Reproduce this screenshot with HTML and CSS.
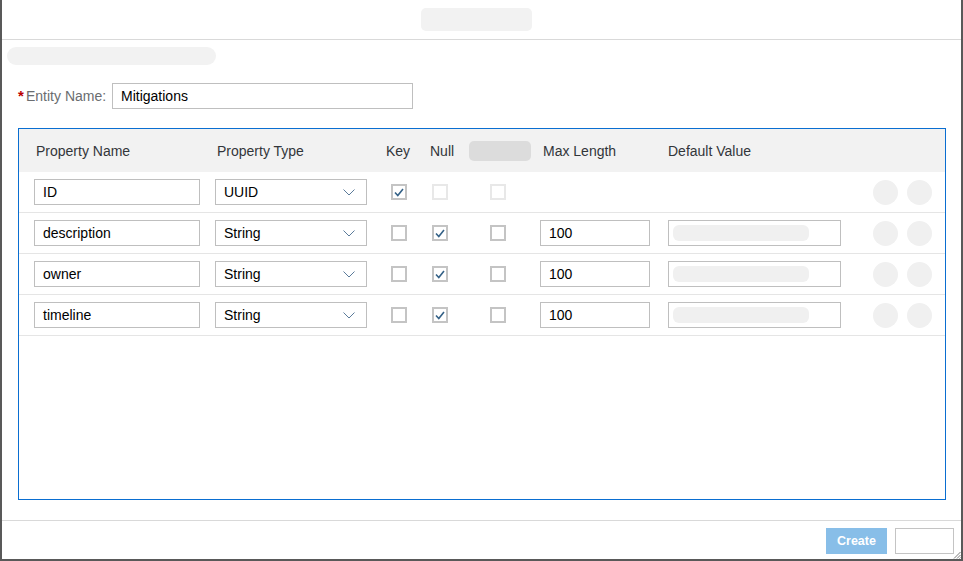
FILE: index.html
```html
<!DOCTYPE html>
<html lang="en">
<head>
<meta charset="utf-8">
<title>Create Entity</title>
<link rel="stylesheet" href="styles.css">
</head>
<body>
<div class="dialog">
  <header class="dlg-header">
    <div class="title-pill"></div>
  </header>

  <main class="dlg-content">
    <div class="sub-pill"></div>

    <div class="entity-row">
      <span class="req">*</span><label class="entity-label">Entity Name:</label>
      <div class="input entity-input">Mitigations</div>
    </div>

    <section class="table">
      <div class="thead">
        <div class="c1 h1">Property Name</div>
        <div class="c2 h2">Property Type</div>
        <div class="c3 h3">Key</div>
        <div class="c4 h4">Null</div>
        <div class="c5 h5"><span class="head-pill"></span></div>
        <div class="c6 h6">Max Length</div>
        <div class="c7 h7">Default Value</div>
      </div>

      <div class="row">
        <div class="c1"><div class="input name-input">ID</div></div>
        <div class="c2"><div class="input select">UUID<svg class="chev" width="12" height="7" viewBox="0 0 12 7"><polyline points="0.5,0.5 6,6 11.5,0.5" fill="none" stroke="#5b7b9a" stroke-width="1"/></svg></div></div>
        <div class="c3"><span class="cb checked"><svg width="10" height="9" viewBox="0 0 10 9"><polyline points="1,4.5 3.8,7.5 9,1" fill="none" stroke="#346187" stroke-width="1.6"/></svg></span></div>
        <div class="c4"><span class="cb disabled"></span></div>
        <div class="c5"><span class="cb disabled"></span></div>
        <div class="c6"></div>
        <div class="c7"></div>
        <div class="c8"><span class="dot"></span><span class="dot"></span></div>
      </div>

      <div class="row">
        <div class="c1"><div class="input name-input">description</div></div>
        <div class="c2"><div class="input select">String<svg class="chev" width="12" height="7" viewBox="0 0 12 7"><polyline points="0.5,0.5 6,6 11.5,0.5" fill="none" stroke="#5b7b9a" stroke-width="1"/></svg></div></div>
        <div class="c3"><span class="cb"></span></div>
        <div class="c4"><span class="cb checked"><svg width="10" height="9" viewBox="0 0 10 9"><polyline points="1,4.5 3.8,7.5 9,1" fill="none" stroke="#346187" stroke-width="1.6"/></svg></span></div>
        <div class="c5"><span class="cb"></span></div>
        <div class="c6"><div class="input len-input">100</div></div>
        <div class="c7"><div class="input def-input"><span class="def-pill"></span></div></div>
        <div class="c8"><span class="dot"></span><span class="dot"></span></div>
      </div>

      <div class="row">
        <div class="c1"><div class="input name-input">owner</div></div>
        <div class="c2"><div class="input select">String<svg class="chev" width="12" height="7" viewBox="0 0 12 7"><polyline points="0.5,0.5 6,6 11.5,0.5" fill="none" stroke="#5b7b9a" stroke-width="1"/></svg></div></div>
        <div class="c3"><span class="cb"></span></div>
        <div class="c4"><span class="cb checked"><svg width="10" height="9" viewBox="0 0 10 9"><polyline points="1,4.5 3.8,7.5 9,1" fill="none" stroke="#346187" stroke-width="1.6"/></svg></span></div>
        <div class="c5"><span class="cb"></span></div>
        <div class="c6"><div class="input len-input">100</div></div>
        <div class="c7"><div class="input def-input"><span class="def-pill"></span></div></div>
        <div class="c8"><span class="dot"></span><span class="dot"></span></div>
      </div>

      <div class="row">
        <div class="c1"><div class="input name-input">timeline</div></div>
        <div class="c2"><div class="input select">String<svg class="chev" width="12" height="7" viewBox="0 0 12 7"><polyline points="0.5,0.5 6,6 11.5,0.5" fill="none" stroke="#5b7b9a" stroke-width="1"/></svg></div></div>
        <div class="c3"><span class="cb"></span></div>
        <div class="c4"><span class="cb checked"><svg width="10" height="9" viewBox="0 0 10 9"><polyline points="1,4.5 3.8,7.5 9,1" fill="none" stroke="#346187" stroke-width="1.6"/></svg></span></div>
        <div class="c5"><span class="cb"></span></div>
        <div class="c6"><div class="input len-input">100</div></div>
        <div class="c7"><div class="input def-input"><span class="def-pill"></span></div></div>
        <div class="c8"><span class="dot"></span><span class="dot"></span></div>
      </div>
    </section>
  </main>

  <footer class="dlg-footer">
    <button class="btn btn-create">Create</button>
    <button class="btn btn-plain"></button>
  </footer>

  <svg class="grip" width="8" height="8" viewBox="0 0 8 8">
    <line x1="7.5" y1="1" x2="1" y2="7.5" stroke="#7a7a7a" stroke-width="1"/>
    <line x1="7.5" y1="4" x2="4" y2="7.5" stroke="#7a7a7a" stroke-width="1"/>
    <line x1="7.5" y1="6.5" x2="6.5" y2="7.5" stroke="#7a7a7a" stroke-width="1"/>
  </svg>
</div>
</body>
</html>
```

FILE: styles.css
```css
html, body {
  margin: 0;
  padding: 0;
  background: #ffffff;
}

body {
  font-family: "Liberation Sans", Arial, sans-serif;
  font-size: 14px;
  color: #32363a;
}

.dialog {
  position: relative;
  width: 963px;
  height: 561px;
  box-sizing: border-box;
  border-left: 2px solid #595959;
  border-right: 2px solid #595959;
  border-bottom: 2px solid #595959;
  display: flex;
  flex-direction: column;
  background: #fff;
}

/* Header */
.dlg-header {
  height: 39px;
  border-bottom: 1px solid #d9d9d9;
  display: flex;
  align-items: center;
  padding-left: 419px;
  flex-shrink: 0;
}

.title-pill {
  width: 111px;
  height: 23px;
  border-radius: 5px;
  background: #f2f2f2;
}

/* Content */
.dlg-content {
  flex: 1;
  display: flex;
  flex-direction: column;
}

.sub-pill {
  width: 209px;
  height: 18px;
  margin: 7px 0 0 5px;
  border-radius: 9px;
  background: #f2f2f2;
}

.entity-row {
  display: flex;
  align-items: center;
  height: 26px;
  margin-top: 18px;
  padding-left: 16px;
}

.req {
  color: #bb0000;
  font-size: 15px;
  font-weight: bold;
  width: 8px;
  line-height: 1;
  position: relative;
  top: -1px;
}

.entity-label {
  color: #6a6d70;
  width: 86px;
}

.input {
  box-sizing: border-box;
  height: 26px;
  border: 1px solid #bfbfbf;
  background: #fff;
  color: #000;
  padding: 0 8px;
  display: flex;
  align-items: center;
  font-size: 14px;
}

.entity-input {
  width: 301px;
}

/* Table */
.table {
  box-sizing: border-box;
  width: 928px;
  height: 372px;
  margin: 19px 0 0 16px;
  border: 1px solid #0a6ed1;
}

.thead {
  display: flex;
  align-items: center;
  height: 43px;
  background: #f2f2f2;
  color: #32363a;
}

.row {
  display: flex;
  align-items: center;
  height: 41px;
  box-sizing: border-box;
  border-bottom: 1px solid #e5e5e5;
}

.c1 { width: 196px; padding-left: 15px; box-sizing: border-box; }
.c2 { width: 170px; box-sizing: border-box; }
.c3 { width: 41px; padding-left: 6px; box-sizing: border-box; }
.c4 { width: 40px; padding-left: 6px; box-sizing: border-box; }
.c5 { width: 74px; padding-left: 24px; box-sizing: border-box; }
.c6 { width: 128px; box-sizing: border-box; }
.c7 { width: 205px; box-sizing: border-box; }
.c8 { display: flex; gap: 9px; }

.row > div { display: flex; align-items: center; }

.thead .h1 { padding-left: 17px; }
.thead .h2 { padding-left: 2px; }
.thead .h3 { padding-left: 1px; }
.thead .h4 { padding-left: 4px; }
.thead .h5 { padding-left: 3px; display: flex; }
.thead .h6 { padding-left: 3px; }

.head-pill {
  display: block;
  width: 62px;
  height: 20px;
  border-radius: 5px;
  background: #dcdcdc;
}

.name-input { width: 166px; }

.select {
  width: 152px;
  justify-content: space-between;
  padding-right: 11px;
}

.chev { display: block; }

.len-input { width: 110px; }

.def-input {
  width: 173px;
  padding-left: 4px;
}

.def-pill {
  display: block;
  width: 136px;
  height: 16px;
  border-radius: 6px;
  background: #f0f0f0;
}

.cb {
  box-sizing: border-box;
  width: 16px;
  height: 16px;
  border: 2px solid #c4c4c4;
  background: #fff;
  display: flex;
  align-items: center;
  justify-content: center;
}

.cb.disabled {
  border-color: #e8e8e8;
}

.cb svg { display: block; }

.dot {
  width: 25px;
  height: 25px;
  border-radius: 50%;
  background: #f0f0f0;
}

/* Footer */
.dlg-footer {
  height: 39px;
  box-sizing: border-box;
  border-top: 1px solid #d9d9d9;
  display: flex;
  justify-content: flex-end;
  align-items: flex-start;
  gap: 8px;
  padding: 7px 7px 0 0;
  flex-shrink: 0;
}

.btn {
  height: 26px;
  box-sizing: border-box;
  font-family: "Liberation Sans", Arial, sans-serif;
  font-size: 12.5px;
  font-weight: bold;
  margin: 0;
  cursor: default;
}

.btn-create {
  width: 61px;
  background: #88bee8;
  color: #ffffff;
  border: none;
}

.btn-plain {
  width: 59px;
  background: #fff;
  border: 1px solid #c4c4c4;
}

.grip {
  position: absolute;
  right: 0;
  bottom: 0;
}
```
